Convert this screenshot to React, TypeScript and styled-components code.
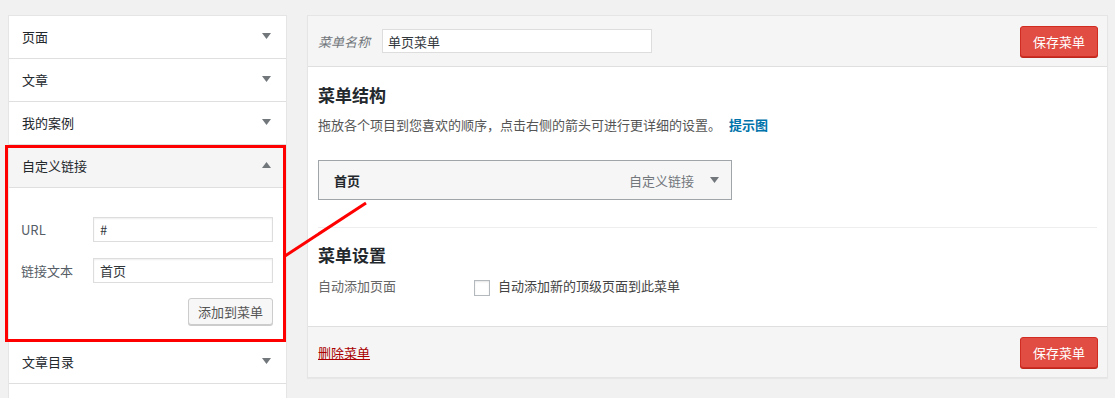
import React from 'react';
import styled, { createGlobalStyle } from 'styled-components';

const GlobalStyle = createGlobalStyle`
	body {
		margin: 0;
		background: #f1f1f1;
		font-family: "Noto Sans CJK SC", "Liberation Sans", sans-serif;
		font-size: 13px;
		color: #444;
	}
`;

const Arrow = ({ up }: { up?: boolean }) => (
	<svg width='9' height='6' viewBox='0 0 9 6'>
		<path d={up ? 'M0 6 L4.5 0 L9 6 Z' : 'M0 0 L9 0 L4.5 6 Z'} fill='#72777c' />
	</svg>
);

export default function App() {
	return (
		<Page>
			<GlobalStyle />
			<Sidebar>
				<AccordionRow>
					<span>页面</span>
					<Arrow />
				</AccordionRow>
				<AccordionRow>
					<span>文章</span>
					<Arrow />
				</AccordionRow>
				<AccordionRow>
					<span>我的案例</span>
					<Arrow />
				</AccordionRow>
				<Highlighted>
					<AccordionRow $open>
						<span>自定义链接</span>
						<Arrow up />
					</AccordionRow>
					<LinkForm>
						<FieldRow>
							<FieldLabel>URL</FieldLabel>
							<TextInput defaultValue='#' />
						</FieldRow>
						<FieldRow>
							<FieldLabel>链接文本</FieldLabel>
							<TextInput defaultValue='首页' />
						</FieldRow>
						<FormActions>
							<GreyButton>添加到菜单</GreyButton>
						</FormActions>
					</LinkForm>
				</Highlighted>
				<AccordionRow>
					<span>文章目录</span>
					<Arrow />
				</AccordionRow>
				<AccordionRow>
					<span></span>
				</AccordionRow>
			</Sidebar>

			<MainPanel>
				<PanelHeader>
					<NameLabel>菜单名称</NameLabel>
					<NameInput defaultValue='单页菜单' />
					<SaveButton>保存菜单</SaveButton>
				</PanelHeader>
				<PanelBody>
					<Heading>菜单结构</Heading>
					<Description>
						拖放各个项目到您喜欢的顺序，点击右侧的箭头可进行更详细的设置。
						<HintLink>提示图</HintLink>
					</Description>
					<MenuItem>
						<ItemTitle>首页</ItemTitle>
						<ItemType>自定义链接</ItemType>
						<Arrow />
					</MenuItem>
					<Separator />
					<Heading>菜单设置</Heading>
					<SettingRow>
						<SettingLabel>自动添加页面</SettingLabel>
						<Checkbox />
						<CheckText>自动添加新的顶级页面到此菜单</CheckText>
					</SettingRow>
				</PanelBody>
				<PanelFooter>
					<DeleteLink>删除菜单</DeleteLink>
					<SaveButton>保存菜单</SaveButton>
				</PanelFooter>
			</MainPanel>

			<Pointer width='1115' height='398'>
				<line x1='285' y1='256' x2='366' y2='203' stroke='#ff0000' strokeWidth='3' />
			</Pointer>
		</Page>
	);
}

const Page = styled.div`
	position: relative;
	display: flex;
	align-items: flex-start;
	gap: 20px;
	padding: 15px 0 0 8px;
	height: 383px;
	overflow: hidden;
`;

const Sidebar = styled.div`
	width: 279px;
	flex-shrink: 0;
	box-sizing: border-box;
	border: 1px solid #e5e5e5;
	border-bottom: none;
	background: #fff;
`;

const AccordionRow = styled.div<{ $open?: boolean }>`
	height: 42px;
	border-bottom: 1px solid #dfdfdf;
	padding: 0 15px 2px 13px;
	box-sizing: border-box;
	height: 43px;
	display: flex;
	align-items: center;
	justify-content: space-between;
	font-size: 13px;
	color: #23282d;
	background: ${(p) => (p.$open ? '#f5f5f5' : '#fff')};
`;

const Highlighted = styled.div`
	position: relative;

	&::after {
		content: '';
		position: absolute;
		top: 0;
		left: -4px;
		right: 0;
		bottom: -1px;
		border: 3px solid #ff0000;
		pointer-events: none;
	}
`;

const LinkForm = styled.div`
	padding: 29px 13px 15px 12px;
	border-bottom: 1px solid #dfdfdf;
	display: flex;
	flex-direction: column;
	gap: 16px;
`;

const FieldRow = styled.div`
	display: flex;
	align-items: center;
`;

const FieldLabel = styled.span`
	width: 72px;
	color: #555d66;
	font-size: 13px;
`;

const TextInput = styled.input`
	width: 180px;
	height: 25px;
	box-sizing: border-box;
	border: 1px solid #ddd;
	box-shadow: inset 0 1px 2px rgba(0, 0, 0, 0.07);
	padding: 0 6px;
	font-family: inherit;
	font-size: 13px;
	color: #32373c;
	outline: none;
`;

const FormActions = styled.div`
	display: flex;
	justify-content: flex-end;
	margin-top: -1px;
`;

const GreyButton = styled.button`
	height: 27px;
	padding: 0 9px;
	border: 1px solid #ccc;
	border-radius: 3px;
	background: #f7f7f7;
	box-shadow: 0 1px 0 #ccc;
	font-family: inherit;
	font-size: 13px;
	color: #555;
`;

const MainPanel = styled.div`
	width: 801px;
	flex-shrink: 0;
	box-sizing: border-box;
	border: 1px solid #e5e5e5;
	box-shadow: 0 1px 1px rgba(0, 0, 0, 0.04);
	background: #fff;
`;

const PanelHeader = styled.div`
	height: 50px;
	display: flex;
	align-items: center;
	padding: 0 9px 0 10px;
	background: #f5f5f5;
	border-bottom: 1px solid #dfdfdf;
`;

const NameLabel = styled.span`
	font-style: italic;
	color: #72777c;
	width: 64px;
`;

const NameInput = styled.input`
	width: 270px;
	height: 24px;
	box-sizing: border-box;
	border: 1px solid #ddd;
	padding: 0 5px;
	font-family: inherit;
	font-size: 13px;
	color: #32373c;
	outline: none;
`;

const SaveButton = styled.button`
	margin-left: auto;
	width: 78px;
	height: 31px;
	border: 1px solid #d02c21;
	border-radius: 3px;
	background: #e14d43;
	box-shadow: 0 1px 0 #ba281e;
	color: #fff;
	font-family: inherit;
	font-size: 13px;
`;

const PanelBody = styled.div`
	padding: 18px 10px 30px 10px;
	border-bottom: 1px solid #dfdfdf;
`;

const Heading = styled.h3`
	margin: 0;
	font-size: 17px;
	line-height: 20px;
	font-weight: 700;
	color: #23282d;
`;

const Description = styled.p`
	margin: 10px 0 0;
	line-height: 20px;
	color: #555;
`;

const HintLink = styled.a`
	margin-left: 8px;
	color: #0073aa;
	font-weight: 700;
`;

const MenuItem = styled.div`
	margin-top: 25px;
	width: 414px;
	height: 40px;
	box-sizing: border-box;
	border: 1px solid #a0a5aa;
	background: #f6f6f6;
	display: flex;
	align-items: center;
	padding: 0 12px 0 15px;
`;

const ItemTitle = styled.span`
	font-weight: 700;
	color: #23282d;
`;

const ItemType = styled.span`
	margin-left: auto;
	margin-right: 16px;
	color: #72777c;
`;

const Separator = styled.hr`
	margin: 27px 0 17px;
	border: none;
	border-top: 1px solid #eee;
`;

const SettingRow = styled.div`
	margin-top: 11px;
	display: flex;
	align-items: center;
	line-height: 20px;
`;

const SettingLabel = styled.span`
	width: 156px;
	color: #666;
`;

const Checkbox = styled.span`
	width: 16px;
	height: 16px;
	box-sizing: border-box;
	border: 1px solid #b4b9be;
	box-shadow: inset 0 1px 2px rgba(0, 0, 0, 0.1);
	background: #fff;
	margin-top: 3px;
`;

const CheckText = styled.span`
	margin-left: 8px;
	color: #444;
`;

const PanelFooter = styled.div`
	height: 50px;
	display: flex;
	align-items: center;
	padding: 0 9px 0 10px;
	background: #f5f5f5;
`;

const DeleteLink = styled.a`
	color: #a00;
	text-decoration: underline;
`;

const Pointer = styled.svg`
	position: absolute;
	top: 0;
	left: 0;
	pointer-events: none;
`;
